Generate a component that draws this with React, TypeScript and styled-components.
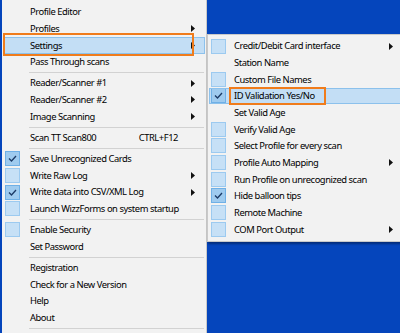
import styled, { createGlobalStyle } from "styled-components";

const GlobalStyle = createGlobalStyle`
  html, body {
    margin: 0;
    padding: 0;
    background: #0545bc;
    overflow: hidden;
  }
  body {
    font-family: "Noto Sans", "Open Sans", sans-serif;
    font-size: 9.4px;
    letter-spacing: -0.45px;
    color: #000;
  }
`;

const Desktop = styled.div`
  display: flex;
  align-items: flex-start;
  height: 333px;
  padding-left: 2px;
  overflow: hidden;
`;

const Menu = styled.div`
  width: 204px;
  flex-shrink: 0;
  height: 360px;
  padding-top: 3.67px;
  background: #f2f2f2;
  border-right: 1px solid #c9c9c9;
`;

const SubMenu = styled.div`
  width: 196px;
  flex-shrink: 0;
  margin-top: 34px;
  padding: 2.7px 0 3px;
  background: #f2f2f2;
  border: 1px solid #c9c9c9;
  box-shadow: 1px 2px 2px rgba(0, 0, 0, 0.35);
`;

const Item = styled.div<{ $hl?: boolean; $gutter: number }>`
  position: relative;
  display: grid;
  grid-template-columns: ${(p) => p.$gutter}px 1fr auto 14px;
  align-items: center;
  height: 16.67px;
  margin: 0 1px;
  box-sizing: border-box;
  background: ${(p) => (p.$hl ? "#c3def5" : "transparent")};
  outline: ${(p) => (p.$hl ? "1px solid #8cc1ec" : "none")};
  outline-offset: -1px;
  white-space: nowrap;
`;

const CheckBox = styled.span<{ $on?: boolean }>`
  display: flex;
  align-items: center;
  justify-content: center;
  width: 15px;
  height: 15px;
  margin-left: 2px;
  box-sizing: border-box;
  background: ${(p) => (p.$on ? "#9fcbef" : "#c6e0f6")};
  border: 1px solid ${(p) => (p.$on ? "#6fb0e6" : "#9ccaf0")};
`;

const Label = styled.span`
  line-height: 1;
`;

const Shortcut = styled.span`
  padding-right: 13px;
  line-height: 1;
`;

const Arrow = styled.span`
  display: flex;
  align-items: center;
`;

const Separator = styled.div`
  height: 4.5px;
  display: flex;
  align-items: center;
  padding-left: 27px;
  padding-right: 2px;
  &::after {
    content: "";
    flex: 1;
    height: 1px;
    background: #d2d2d2;
  }
`;

const Mark = styled.div<{ $l: number; $t: number; $w: number; $h: number }>`
  position: absolute;
  left: ${(p) => p.$l}px;
  top: ${(p) => p.$t}px;
  width: ${(p) => p.$w}px;
  height: ${(p) => p.$h}px;
  box-sizing: border-box;
  border: 2.5px solid #f07c1c;
  pointer-events: none;
`;

type Entry =
  | "sep"
  | {
      label: string;
      check?: "on" | "off";
      arrow?: boolean;
      shortcut?: string;
      hl?: boolean;
      mark?: [number, number, number, number];
    };

const mainItems: Entry[] = [
  { label: "Profile Editor" },
  { label: "Profiles", arrow: true },
  { label: "Settings", arrow: true, hl: true, mark: [0, -4, 191, 23] },
  { label: "Pass Through scans" },
  "sep",
  { label: "Reader/Scanner #1", arrow: true },
  { label: "Reader/Scanner #2", arrow: true },
  { label: "Image Scanning", arrow: true },
  "sep",
  { label: "Scan TT Scan800", shortcut: "CTRL+F12" },
  "sep",
  { label: "Save Unrecognized Cards", check: "on" },
  { label: "Write Raw Log", check: "off", arrow: true },
  { label: "Write data into CSV/XML Log", check: "on", arrow: true },
  { label: "Launch WizzForms on system startup", check: "off" },
  "sep",
  { label: "Enable Security", check: "off" },
  { label: "Set Password" },
  "sep",
  { label: "Registration" },
  { label: "Check for a New Version" },
  { label: "Help" },
  { label: "About" },
  "sep",
  { label: "" },
];

const subItems: Entry[] = [
  { label: "Credit/Debit Card interface", check: "off", arrow: true },
  { label: "Station Name" },
  { label: "Custom File Names", check: "off" },
  { label: "ID Validation Yes/No", check: "on", hl: true, mark: [20, -1, 97, 18] },
  { label: "Set Valid Age" },
  { label: "Verify Valid Age", check: "off" },
  { label: "Select Profile for every scan", check: "off" },
  { label: "Profile Auto Mapping", check: "off", arrow: true },
  { label: "Run Profile on unrecognized scan", check: "off" },
  { label: "Hide balloon tips", check: "on" },
  { label: "Remote Machine", check: "off" },
  { label: "COM Port Output", check: "off", arrow: true },
];

const Tick = () => (
  <svg width="9" height="7" viewBox="0 0 9 7">
    <path d="M1 3.5 L3.5 6 L8 1" fill="none" stroke="#1c3a66" strokeWidth="1.3" />
  </svg>
);

const Triangle = () => (
  <svg width="4" height="7" viewBox="0 0 4 7">
    <path d="M0 0 L4 3.5 L0 7 Z" fill="#111" />
  </svg>
);

const MenuList = ({ items, gutter }: { items: Entry[]; gutter: number }) => (
  <>
    {items.map((it, i) =>
      it === "sep" ? (
        <Separator key={i} />
      ) : (
        <Item key={i} $hl={it.hl} $gutter={gutter}>
          <span>
            {it.check && <CheckBox $on={it.check === "on"}>{it.check === "on" && <Tick />}</CheckBox>}
          </span>
          <Label>{it.label}</Label>
          <Shortcut>{it.shortcut}</Shortcut>
          <Arrow>{it.arrow && <Triangle />}</Arrow>
          {it.mark && <Mark $l={it.mark[0]} $t={it.mark[1]} $w={it.mark[2]} $h={it.mark[3]} />}
        </Item>
      )
    )}
  </>
);

export default function App() {
  return (
    <>
      <GlobalStyle />
      <Desktop>
        <Menu>
          <MenuList items={mainItems} gutter={27} />
        </Menu>
        <SubMenu>
          <MenuList items={subItems} gutter={25} />
        </SubMenu>
      </Desktop>
    </>
  );
}
